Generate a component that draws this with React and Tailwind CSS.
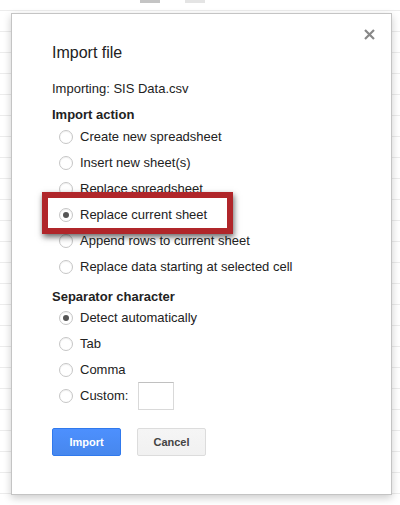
import React from 'react';

const IMPORT_ACTIONS = [
  'Create new spreadsheet',
  'Insert new sheet(s)',
  'Replace spreadsheet',
  'Replace current sheet',
  'Append rows to current sheet',
  'Replace data starting at selected cell',
];

const SEPARATORS = ['Detect automatically', 'Tab', 'Comma'];

const Radio = ({ checked }) => (
  <span className="ml-[7px] flex h-[14px] w-[14px] shrink-0 items-center justify-center rounded-full border border-[#c6c6c6] bg-white shadow-[inset_0_1px_1px_rgba(0,0,0,0.06)]">
    {checked && <span className="h-[6px] w-[6px] rounded-full bg-[#555]" />}
  </span>
);

const RadioRow = ({ label, checked, children }) => (
  <div className="flex h-[26px] items-center">
    <Radio checked={checked} />
    <span className="ml-[7px]">{label}</span>
    {children}
  </div>
);

export default function App() {
  return (
    <div className="relative h-[505px] w-[400px] overflow-hidden bg-white bg-[linear-gradient(to_bottom,#ececec_1px,transparent_1px)] bg-[length:100%_21px] bg-[position:0_10px] pt-[13px] pl-[11px] font-['Liberation_Sans',Arial,sans-serif] text-[13px] leading-[16px] text-[#222]">
      {/* toolbar remnants at the very top */}
      <div className="absolute left-[140px] top-0 h-[3px] w-[20px] bg-[#c4c4c4]" />
      <div className="absolute left-[185px] top-0 h-[3px] w-[20px] bg-[#e4e4e4]" />

      <div className="relative h-[482px] w-[381px] border border-[#c4c4c4] bg-white pt-[29px] pl-[40px] shadow-[0_3px_8px_rgba(0,0,0,0.2)]">
        <button className="absolute right-[16px] top-[15px] text-[#888]">
          <svg width="11" height="11" viewBox="0 0 11 11">
            <path d="M1 1L10 10M10 1L1 10" stroke="currentColor" strokeWidth="2.2" />
          </svg>
        </button>

        <div className="h-[20px] text-[16px] leading-[20px]">Import file</div>

        <div className="mt-[18px]">Importing: SIS Data.csv</div>

        <div className="mt-[10px] font-bold">Import action</div>
        <div className="mt-[1px]">
          {IMPORT_ACTIONS.map((label) => (
            <RadioRow key={label} label={label} checked={label === 'Replace current sheet'} />
          ))}
        </div>

        <div className="mt-[9px] font-bold">Separator character</div>
        <div>
          {SEPARATORS.map((label) => (
            <RadioRow key={label} label={label} checked={label === 'Detect automatically'} />
          ))}
          <RadioRow label="Custom:">
            <span className="ml-[10px] h-[28px] w-[36px] border border-[#d9d9d9] border-t-[#c0c0c0] bg-white" />
          </RadioRow>
        </div>

        <div className="mt-[19px] flex gap-[16px]">
          <button className="h-[28px] w-[69px] rounded-[2px] border border-[#3079ed] bg-[linear-gradient(to_bottom,#4d90fe,#4787ed)] text-[11px] font-bold text-white">
            Import
          </button>
          <button className="h-[28px] w-[69px] rounded-[2px] border border-[#dcdcdc] bg-[linear-gradient(to_bottom,#f5f5f5,#f1f1f1)] text-[11px] font-bold text-[#444]">
            Cancel
          </button>
        </div>

        {/* red annotation box over the selected option */}
        <div className="absolute left-[30px] top-[178px] h-[42px] w-[191px] border-[6px] border-[#b0262a] shadow-[1px_3px_6px_rgba(0,0,0,0.6)]" />
      </div>
    </div>
  );
}
